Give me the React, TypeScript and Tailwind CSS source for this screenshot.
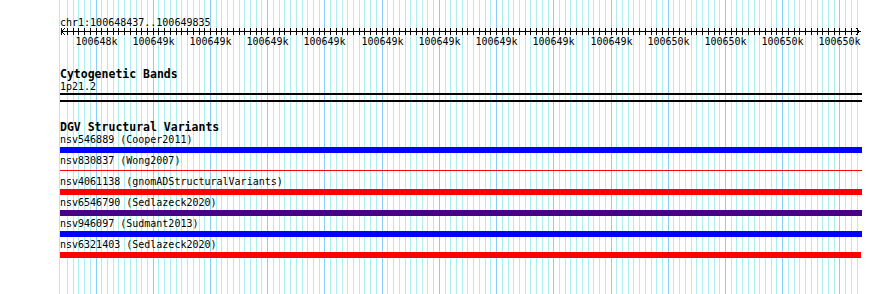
import React from "react";

const START = 100648437;
const S = 0.5722;
const px = (bp: number) => Math.floor(60 + (bp - START) * S);

const minors: number[] = [];
for (let bp = 100648450; bp <= 100649830; bp += 10) minors.push(bp);

const labels = [
  "100648k", "100649k", "100649k", "100649k", "100649k", "100649k", "100649k",
  "100649k", "100649k", "100649k", "100650k", "100650k", "100650k", "100650k",
];

const rows: { text: string; bar: string }[] = [
  { text: "nsv546889 (Cooper2011)", bar: "h-[6px] w-[802px] bg-[#0000ff]" },
  { text: "nsv830837 (Wong2007)", bar: "mt-[2px] h-px w-[802px] bg-[#ff0000]" },
  { text: "nsv4061138 (gnomADStructuralVariants)", bar: "h-[6px] w-[802px] bg-[#ff0000]" },
  { text: "nsv6546790 (Sedlazeck2020)", bar: "h-[6px] w-[802px] bg-[#4b0082]" },
  { text: "nsv946097 (Sudmant2013)", bar: "h-[6px] w-[802px] bg-[#0000ff]" },
  { text: "nsv6321403 (Sedlazeck2020)", bar: "h-[6px] w-[801px] bg-[#ff0000]" },
];

function Grid() {
  return (
    <svg className="pointer-events-none absolute left-0 top-0" width={890} height={294} shapeRendering="crispEdges">
      <rect x={59} y={0} width={1} height={294} fill="#afeeee" />
      {minors.map((bp) => (
        <rect
          key={bp}
          x={px(bp)}
          y={0}
          width={1}
          height={294}
          fill={bp % 100 === 0 ? "#87cefa" : "#afeeee"}
        />
      ))}
    </svg>
  );
}

function Ruler() {
  return (
    <svg width={802} height={18} className="block" shapeRendering="crispEdges">
      <rect x={1} y={3} width={800} height={1} fill="#000" />
      {minors.concat([100648440]).map((bp) => (
        <rect key={bp} x={px(bp) - 60} y={0} width={1} height={7} fill="#000" />
      ))}
      <polyline points="5,0 1.5,3.5 5,7" fill="none" stroke="#000" strokeWidth={1} shapeRendering="auto" />
      <polyline points="796,0 799.5,3.5 796,7" fill="none" stroke="#000" strokeWidth={1} shapeRendering="auto" />
      {labels.map((l, i) => (
        <text
          key={i}
          x={px(100648500 + i * 100) - 60 + 0.5}
          y={16.5}
          textAnchor="middle"
          fontSize={10}
          fontFamily="'DejaVu Sans Mono', monospace"
          fill="#000"
        >
          {l}
        </text>
      ))}
    </svg>
  );
}

export default function App() {
  return (
    <div className="relative h-[294px] w-[890px] overflow-hidden bg-white font-['DejaVu_Sans_Mono',monospace] text-black">
      <Grid />
      <div className="relative flex flex-col pl-[60px]">
        <div className="mt-[15px] h-[13px] text-[10px] leading-[15px]">chr1:100648437..100649835</div>
        <Ruler />
        <div className="mt-[22px] h-[12px] text-[11.5px] font-bold leading-[13px]">Cytogenetic Bands</div>
        <div className="h-[12px] text-[10px] leading-[14px]">1p21.2</div>
        <div className="mt-px h-[2px] w-[802px] bg-black" />
        <div className="mt-[5px] h-[2px] w-[802px] bg-black" />
        <div className="mt-[19px] h-[12px] text-[11.5px] font-bold leading-[13px]">DGV Structural Variants</div>
        <div className="flex flex-col">
          {rows.map((r) => (
            <div key={r.text} className="flex flex-col pb-px">
              <div className="h-[12px] text-[10px] leading-[14px]">{r.text}</div>
              <div className="mt-[2px] h-[6px]">
                <div className={r.bar} />
              </div>
            </div>
          ))}
        </div>
      </div>
    </div>
  );
}
